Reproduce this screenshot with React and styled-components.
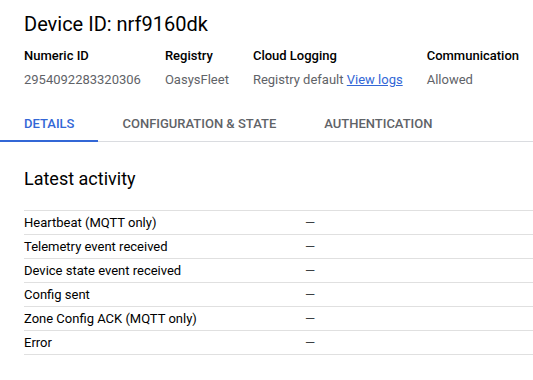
import React from "react";
import styled, { createGlobalStyle } from "styled-components";

const Global = createGlobalStyle`
  html, body { margin: 0; padding: 0; background: #fff; }
  body { font-family: Roboto, "Liberation Sans", Arial, sans-serif; color: #202124; }
`;

const Page = styled.div`
  width: 533px;
  padding-top: 10px;
`;

const Title = styled.h1`
  margin: 0 0 0 24px;
  font-size: 20px;
  line-height: 28px;
  font-weight: 400;
  color: #000;
`;

const Meta = styled.div`
  display: flex;
  gap: 24px;
  margin: 8px 0 10px 24px;
`;

const MetaCol = styled.div`
  display: flex;
  flex-direction: column;
  gap: 4px;
  white-space: nowrap;
`;

const MetaLabel = styled.div`
  font-size: 13px;
  line-height: 20px;
  font-weight: 500;
  color: #000;
`;

const MetaValue = styled.div`
  font-size: 13px;
  line-height: 20px;
  color: #5f6368;
`;

const Link = styled.a`
  color: #3367d6;
  text-decoration: underline;
  cursor: pointer;
`;

const TabBar = styled.div`
  display: flex;
  box-shadow: inset 0 -1px 0 #dadce0;
`;

const Tab = styled.div`
  padding: 14px 24px 6px;
  font-size: 13px;
  line-height: 20px;
  font-weight: 500;
  text-transform: uppercase;
  color: ${(p) => (p.$active ? "#3367d6" : "#5f6368")};
  border-bottom: 2px solid ${(p) => (p.$active ? "#3367d6" : "transparent")};
`;

const Section = styled.section`
  margin-left: 24px;
`;

const SectionTitle = styled.h2`
  margin: 25px 0 19px;
  font-size: 18px;
  line-height: 24px;
  font-weight: 400;
  color: #000;
`;

const Table = styled.div`
  border-top: 1px solid #e0e0e0;
`;

const Row = styled.div`
  display: grid;
  grid-template-columns: 281px 1fr;
  height: 23px;
  align-items: center;
  font-size: 13px;
  line-height: 23px;
  color: #000;
  border-bottom: 1px solid #e0e0e0;
`;

const Value = styled.span`
  color: #3c4043;
`;

const meta = [
  { label: "Numeric ID", value: "2954092283320306" },
  { label: "Registry", value: "OasysFleet" },
  { label: "Cloud Logging", value: "Registry default", link: "View logs" },
  { label: "Communication", value: "Allowed" },
];

const rows = [
  "Heartbeat (MQTT only)",
  "Telemetry event received",
  "Device state event received",
  "Config sent",
  "Zone Config ACK (MQTT only)",
  "Error",
];

export default function App() {
  return (
    <Page>
      <Global />
      <Title>Device ID: nrf9160dk</Title>
      <Meta>
        {meta.map((m) => (
          <MetaCol key={m.label}>
            <MetaLabel>{m.label}</MetaLabel>
            <MetaValue>
              {m.value}
              {m.link && (
                <>
                  {" "}
                  <Link>{m.link}</Link>
                </>
              )}
            </MetaValue>
          </MetaCol>
        ))}
      </Meta>
      <TabBar>
        <Tab $active>Details</Tab>
        <Tab>Configuration &amp; State</Tab>
        <Tab>Authentication</Tab>
      </TabBar>
      <Section>
        <SectionTitle>Latest activity</SectionTitle>
        <Table>
          {rows.map((r) => (
            <Row key={r}>
              <span>{r}</span>
              <Value>—</Value>
            </Row>
          ))}
        </Table>
      </Section>
    </Page>
  );
}
